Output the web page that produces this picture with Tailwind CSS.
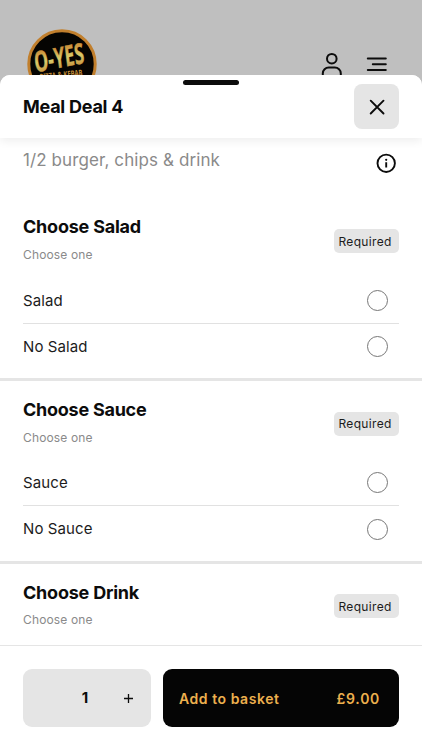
<!DOCTYPE html>
<html lang="en">
<head>
<meta charset="utf-8">
<title>Meal Deal 4</title>
<script src="https://cdn.jsdelivr.net/npm/@tailwindcss/browser@4"></script>
</head>
<body class="w-[422px] h-[750px] overflow-hidden bg-[#bfbfbf] font-['Inter',sans-serif] text-[#0c0c0c]">
<div class="flex h-[750px] flex-col">
  <header class="flex h-[75px] shrink-0 items-start justify-between overflow-hidden pl-[27px] pr-[34px]">
    <svg class="mt-[29px] h-[70px] w-[70px] shrink-0" viewBox="0 0 70 70">
      <defs><linearGradient id="gold" x1="0" y1="0" x2="0" y2="1"><stop offset="0.2" stop-color="#c98432"/><stop offset=".55" stop-color="#d8ca68"/><stop offset=".8" stop-color="#c99a44"/></linearGradient></defs>
      <circle cx="35" cy="35" r="33.200" fill="#050402" stroke="#c17f2d" stroke-width="3"/>
      <text transform="translate(8.500 43.500) rotate(-11) skewX(-4)" x="0" y="0" fill="url(#gold)" stroke="url(#gold)" stroke-width=".4" font-family="'Open Sans',sans-serif" font-weight="700" font-size="28.500" textLength="50.500" lengthAdjust="spacingAndGlyphs">O-YES</text>
      <text transform="translate(13 51) rotate(-6)" x="0" y="0" font-size="8.500" fill="#c18a38" font-family="'Open Sans',sans-serif" font-weight="700" textLength="43" lengthAdjust="spacingAndGlyphs">PIZZA &amp; KEBAB</text>
    </svg>
    <div class="mt-[52px] flex gap-[23px]">
      <svg class="h-[24px] w-[22px]" viewBox="0 0 22 24" fill="none" stroke="#0c0c0c" stroke-width="2" stroke-linecap="round"><circle cx="10.800" cy="6.700" r="4.800"/><path d="M1.800 26v-4.500a6 6 0 0 1 6-6h6a6 6 0 0 1 6 6V26"/></svg>
      <svg class="h-[24px] w-[22px]" viewBox="0 0 22 24" fill="none" stroke="#0c0c0c" stroke-width="2" stroke-linecap="round"><path d="M1.800 6.600h18M6.800 12.300h13M1.800 18h18"/></svg>
    </div>
  </header>

  <main class="relative flex min-h-0 flex-1 flex-col overflow-hidden rounded-t-[10px] bg-white">
    <div class="absolute left-[183px] top-[5px] z-20 h-[5px] w-[56px] rounded-full bg-[#0c0c0c]"></div>
    <div class="z-10 flex h-[63px] shrink-0 items-center justify-between bg-white px-[23px] shadow-[0_3px_9px_rgba(0,0,0,0.07)]">
      <h1 class="mt-px text-[18px] font-bold leading-6 tracking-[-0.250px]">Meal Deal 4</h1>
      <button class="flex h-[45px] w-[45px] items-center justify-center rounded-[8px] bg-[#e5e5e5]" aria-label="Close">
        <svg class="h-4 w-4" viewBox="0 0 16 16" fill="none" stroke="#0c0c0c" stroke-width="1.900" stroke-linecap="round"><path d="M1.700 1.700l12.800 12.800M14.500 1.700L1.700 14.500"/></svg>
      </button>
    </div>

    <div class="min-h-0 flex-1 overflow-hidden">
      <div class="flex h-[60.330px] items-start justify-between pl-[23px] pr-[26px]">
        <p class="mt-[10px] text-[17px] leading-6 tracking-[0.100px] text-[#8a8a8a]">1/2 burger, chips &amp; drink</p>
        <svg class="mt-[15px] h-5 w-5" viewBox="0 0 20 20" fill="none"><circle cx="10.200" cy="10.300" r="8.700" stroke="#0c0c0c" stroke-width="1.900"/><path d="M10.200 9.200v5.200" stroke="#0c0c0c" stroke-width="1.900"/><circle cx="10.200" cy="6.800" r="1.100" fill="#0c0c0c"/></svg>
      </div>

      <section class="h-[182.670px] border-b-[3px] border-[#e5e5e5] px-[23px]">
        <div class="flex h-[79.500px] items-start justify-between">
          <div class="pt-[17px]"><h2 class="text-[18px] font-bold leading-6 tracking-[-0.220px]">Choose Salad</h2><p class="mt-[6px] text-[12px] leading-5 tracking-[0.150px] text-[#8a8a8a]">Choose one</p></div>
          <span class="mt-[31px] h-6 w-[65px] rounded-[5px] bg-[#e5e5e5] pl-[4.500px] pt-px text-[12px] leading-6 tracking-[0.320px] text-[#1c1c1c]">Required</span>
        </div>
        <div class="flex h-[46px] items-center justify-between border-b border-[#e1e1e1] pr-[11px] text-[15px] tracking-[0.100px] text-[#1c1c1c]"><span class="pt-px">Salad</span><span class="h-[21px] w-[21px] rounded-full border border-[#777]"></span></div>
        <div class="flex h-[46px] items-center justify-between pr-[11px] text-[15px] tracking-[0.100px] text-[#1c1c1c]"><span>No Salad</span><span class="h-[21px] w-[21px] rounded-full border border-[#777]"></span></div>
      </section>

      <section class="h-[182.670px] border-b-[3px] border-[#e5e5e5] px-[23px]">
        <div class="flex h-[79.500px] items-start justify-between">
          <div class="pt-[17px]"><h2 class="text-[18px] font-bold leading-6 tracking-[-0.250px]">Choose Sauce</h2><p class="mt-[6px] text-[12px] leading-5 tracking-[0.150px] text-[#8a8a8a]">Choose one</p></div>
          <span class="mt-[31px] h-6 w-[65px] rounded-[5px] bg-[#e5e5e5] pl-[4.500px] text-[12px] leading-6 tracking-[0.320px] text-[#1c1c1c]">Required</span>
        </div>
        <div class="flex h-[46px] items-center justify-between border-b border-[#e1e1e1] pr-[11px] text-[15px] tracking-[0.100px] text-[#1c1c1c]"><span>Sauce</span><span class="h-[21px] w-[21px] rounded-full border border-[#777]"></span></div>
        <div class="flex h-[46px] items-center justify-between pr-[11px] text-[15px] tracking-[0.100px] text-[#1c1c1c]"><span>No Sauce</span><span class="h-[21px] w-[21px] rounded-full border border-[#777]"></span></div>
      </section>

      <section class="px-[23px]">
        <div class="flex h-[79px] items-start justify-between">
          <div class="pt-[17px]"><h2 class="text-[18px] font-bold leading-6 tracking-[-0.220px]">Choose Drink</h2><p class="mt-[5px] text-[12px] leading-5 tracking-[0.150px] text-[#8a8a8a]">Choose one</p></div>
          <span class="mt-[30.500px] h-6 w-[65px] rounded-[5px] bg-[#e5e5e5] pl-[4.500px] pt-px text-[12px] leading-6 tracking-[0.320px] text-[#1c1c1c]">Required</span>
        </div>
      </section>
    </div>

    <footer class="flex h-[105px] shrink-0 gap-3 border-t border-[#e5e5e5] bg-white px-[23px] pt-[23px]">
      <div class="flex h-[58px] w-[128px] items-center rounded-[9px] bg-[#e5e5e5]">
        <span class="ml-[57px] w-[10px] text-center text-[15px] font-bold">1</span>
        <svg class="ml-[34px] mt-px h-[9px] w-[9px]" viewBox="0 0 9 9" stroke="#0c0c0c" stroke-width="1.300"><path d="M0 4.500h9M4.500 0v9"/></svg>
      </div>
      <button class="flex h-[58px] flex-1 items-center justify-between rounded-[9px] bg-[#050505] pl-4 pr-[19px] pt-px text-[14px] font-semibold tracking-[0.550px] text-[#edb04e]"><span>Add to basket</span><span class="tracking-[0.700px]">£9.00</span></button>
    </footer>
  </main>
</div>
</body>
</html>
